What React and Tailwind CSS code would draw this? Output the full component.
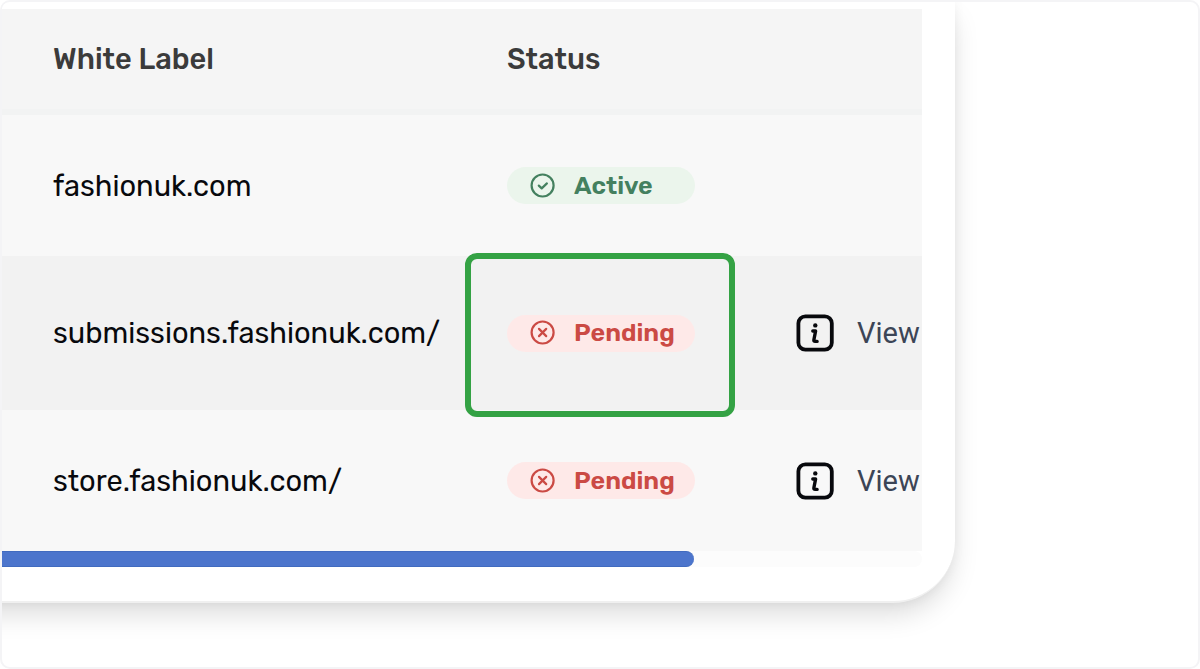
const domains = [
  { name: "fashionuk.com", status: "Active", row: "h-[141px] bg-[#f8f8f8]" },
  { name: "submissions.fashionuk.com/", status: "Pending", row: "h-[154px] bg-[#f2f2f2]", view: true, highlighted: true },
  { name: "store.fashionuk.com/", status: "Pending", row: "h-[141px] bg-[#f8f8f8]", view: true },
];

function StatusIcon({ active }) {
  return (
    <svg viewBox="0 0 26 26" className="size-[26px] shrink-0" fill="none" stroke="currentColor" strokeWidth="2.2" strokeLinecap="round" strokeLinejoin="round" aria-hidden="true">
      <circle cx="12.6" cy="12.5" r="11" />
      {active ? <path d="M8.8 12.6l2.9 2.8 5.2-5" /> : <path d="M9 8.9l7.2 7.2M16.2 8.9l-7.2 7.2" />}
    </svg>
  );
}

function InfoIcon() {
  return (
    <svg viewBox="0 0 38 38" className="size-[38px] shrink-0" fill="none" stroke="#08090d" strokeLinecap="round" strokeLinejoin="round" aria-hidden="true">
      <rect x="2.4" y="2.3" width="33.4" height="33.4" rx="7" strokeWidth="3.8" />
      <circle cx="19.3" cy="11.4" r="2.2" fill="#08090d" stroke="none" />
      <path d="M16.8 17h2.8l-1.7 8.8q-.3 1.6 1.2 1.6h2" strokeWidth="3.4" />
    </svg>
  );
}

function StatusBadge({ status }) {
  const active = status === "Active";
  const tone = active ? "bg-[#ebf5ec] text-[#44805f]" : "bg-[#fee9e8] text-[#cb4a44]";
  return (
    <span className={`flex h-[37px] w-[188px] items-center gap-[18px] rounded-full pl-[23px] text-[25px] leading-[36px] font-semibold ${tone}`}>
      <StatusIcon active={active} />
      {status}
    </span>
  );
}

export default function App() {
  return (
    <main className="flex min-h-screen overflow-hidden rounded-[10px] border-2 border-[#f4f4f6] bg-white pb-16 font-['Rubik','Roboto',sans-serif]">
      <section className="mr-[243px] -ml-16 min-w-0 flex-1 rounded-br-[62px] border-b-2 border-[#f0f0f0] bg-white pt-[7px] pr-[33px] pb-[34px] pl-16 shadow-[0_14px_28px_-4px_rgba(0,0,0,0.15),0_0_12px_rgba(0,0,0,0.05)]">
        <div className="overflow-hidden">
          <table className="w-full table-fixed border-collapse text-left text-[29px] leading-[36px]">
            <colgroup>
              <col className="w-[505px]" />
              <col className="w-[289px]" />
              <col />
            </colgroup>
            <thead>
              <tr className="h-[106px] bg-[#f5f5f5] text-[#3b3b3b] shadow-[inset_0_-6px_0_#f2f3f3]">
                <th className="pb-[6px] pl-[51px] font-medium">White Label</th>
                <th className="pb-[6px] font-medium">Status</th>
                <th aria-label="Details" />
              </tr>
            </thead>
            <tbody>
              {domains.map((domain) => (
                <tr key={domain.name} className={domain.row}>
                  <td className="pl-[51px] whitespace-nowrap text-[#08090d]">{domain.name}</td>
                  <td className="relative">
                    <StatusBadge status={domain.status} />
                    {domain.highlighted && (
                      <span className="pointer-events-none absolute -top-[3px] -bottom-[7px] -left-[42px] w-[270px] rounded-xl border-[6px] border-[#34a244]" />
                    )}
                  </td>
                  <td>
                    {domain.view && (
                      <button type="button" className="flex items-center gap-[23px] font-['Roboto',sans-serif] text-[#3c4556]">
                        <InfoIcon />
                        View
                      </button>
                    )}
                  </td>
                </tr>
              ))}
            </tbody>
          </table>
        </div>
        <div className="h-[16px] rounded-r-full bg-[#fcfcfc]">
          <div className="h-full w-[692px] max-w-full rounded-r-full border-y border-y-[#416bbf] bg-[#4c75cc]" />
        </div>
      </section>
    </main>
  );
}
